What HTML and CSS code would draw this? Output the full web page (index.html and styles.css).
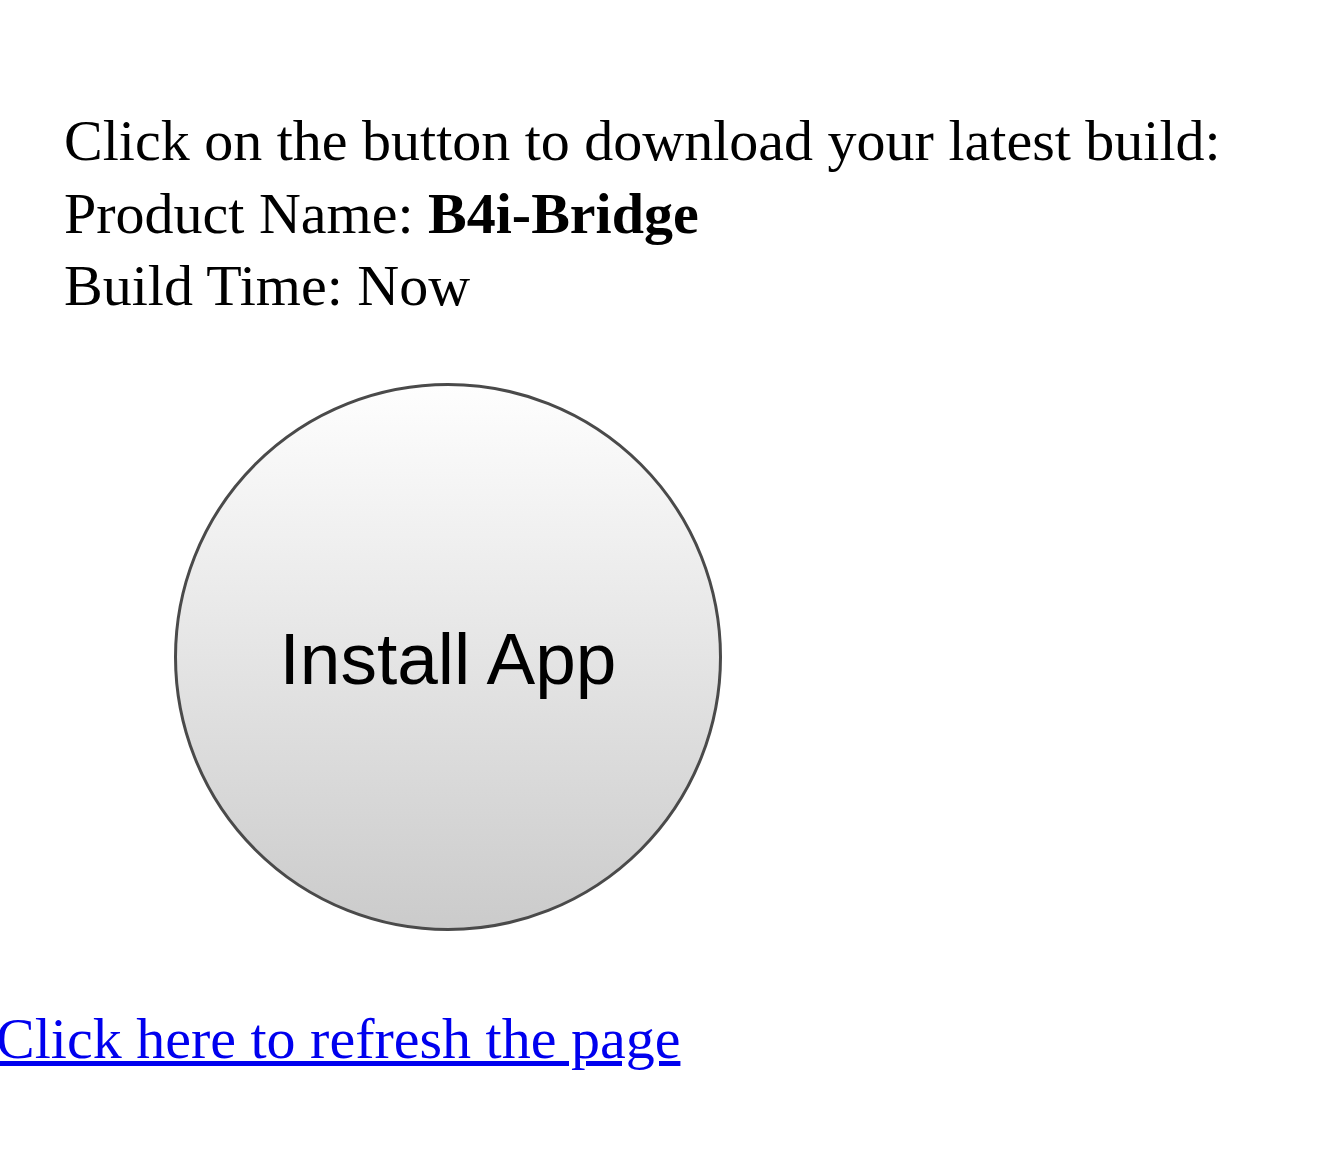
FILE: index.html
```html
<!DOCTYPE html>
<html>
<head>
<meta charset="utf-8">
<link rel="stylesheet" href="styles.css">
</head>
<body>
<div class="info">
  <div class="line">Click on the button to download your latest build:</div>
  <div class="line">Product Name: <b>B4i-Bridge</b></div>
  <div class="line">Build Time: Now</div>
</div>
<div class="btn-wrap">
  <a class="install" href="#">Install App</a>
</div>
<a class="refresh" href="#">Click here to refresh the page</a>
</body>
</html>
```
FILE: styles.css
```css
html, body {
  margin: 0;
  padding: 0;
  background: #fff;
}
body {
  font-family: "Liberation Serif", "Times New Roman", serif;
  color: #000;
}
.info {
  padding: 105px 0 0 64px;
  font-size: 58px;
  line-height: 72.5px;
  white-space: nowrap;
}
.btn-wrap {
  padding: 60px 0 0 174px;
}
.install {
  display: flex;
  align-items: center;
  justify-content: center;
  box-sizing: border-box;
  width: 548px;
  height: 548px;
  padding-top: 4px;
  border: 3px solid #4a4a4a;
  border-radius: 50%;
  background: linear-gradient(to bottom, #fefefe 0%, #cbcbcb 100%);
  font-family: "Liberation Sans", Arial, sans-serif;
  font-size: 73px;
  color: #000;
  text-decoration: none;
}
.refresh {
  display: inline-block;
  margin: 72px 0 0 -4px;
  font-size: 58px;
  line-height: 72.5px;
  color: #0000ee;
}
```
